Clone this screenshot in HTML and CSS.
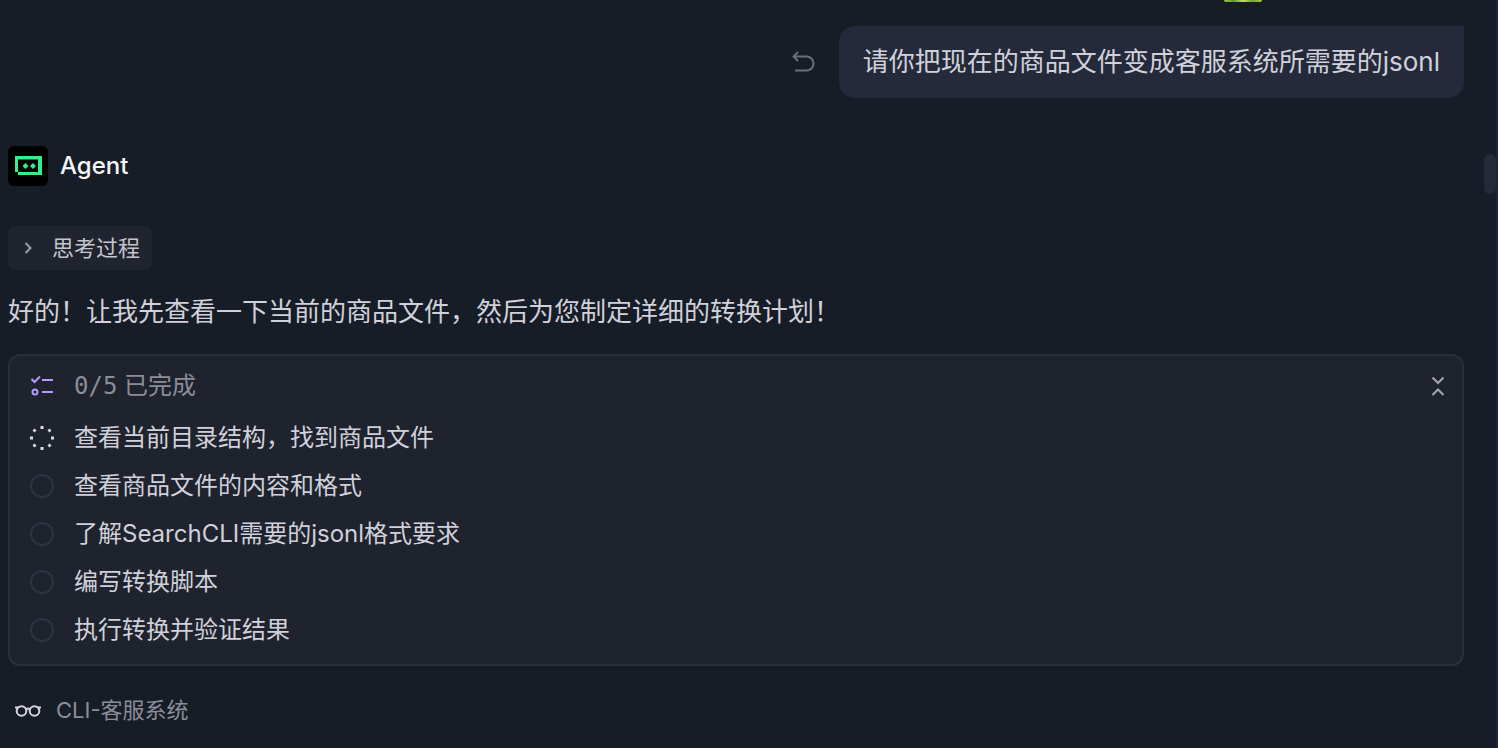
FILE: index.html
```html
<!DOCTYPE html>
<html lang="zh-CN">
<head>
    <meta charset="UTF-8">
    <meta name="viewport" content="width=device-width, initial-scale=1.0">
    <title>Agent</title>
    <link rel="stylesheet" href="styles.css">
</head>
<body>
    <main class="chat">
        <div class="user-avatar"></div>

        <div class="user-row">
            <button type="button" class="icon-btn" aria-label="撤回">
                <svg width="24" height="24" viewBox="0 0 24 24" fill="none" stroke="#6a6e79" stroke-width="2">
                    <path d="M7 2L2.500 6.500L7 11M3 6.500H15.500A7 7 0 0 1 15.500 20.500H4"/>
                </svg>
            </button>
            <p class="bubble">请你把现在的商品文件变成客服系统所需要的jsonl</p>
        </div>

        <div class="agent">
            <svg class="agent-logo" width="40" height="40" viewBox="0 0 40 40">
                <path fill="#32f08c" fill-rule="evenodd" d="M7 10H34V29H10V26H7ZM10 13.500V26H30V13.500Z"/>
                <path fill="#32f08c" d="M17.500 17L20.500 20L17.500 23L14.500 20ZM25 17L28 20L25 23L22 20Z"/>
            </svg>
            <span class="agent-name">Agent</span>
        </div>

        <button type="button" class="thinking">
            <svg width="16" height="16" viewBox="0 0 16 16" fill="none" stroke="#9a9da8" stroke-width="2">
                <path d="M5.500 3L10.500 8L5.500 13"/>
            </svg>
            思考过程
        </button>

        <p class="reply">好的！让我先查看一下当前的商品文件，然后为您制定详细的转换计划！</p>

        <section class="todo">
            <header class="todo-head">
                <svg width="24" height="24" viewBox="0 0 24 24" fill="none" stroke="#b799ff" stroke-width="2">
                    <path d="M1.500 5L4.500 8L10 2.500M12 6H23M12 18H23"/>
                    <circle cx="5" cy="18" r="2.500"/>
                </svg>
                <span class="todo-status"><span class="count">0/5</span> 已完成</span>
                <button type="button" class="icon-btn" aria-label="收起">
                    <svg width="24" height="24" viewBox="0 0 24 24" fill="none" stroke="#a5a7b1" stroke-width="2">
                        <path d="M6.500 3.500L12 9L17.500 3.500M6.500 21L12 15.500L17.500 21"/>
                    </svg>
                </button>
            </header>
            <ul class="todo-list">
                <li>
                    <svg width="24" height="24" viewBox="0 0 24 24" fill="#dcdde3">
                        <path d="M10.500 0h3v3h-3zM10.500 21h3v3h-3zM0 10.500h3v3h-3zM21 10.500h3v3h-3z"/>
                        <path d="M4.500 2.500l2 2l-2 2l-2-2zM19.500 2.500l2 2l-2 2l-2-2zM4.500 17.500l2 2l-2 2l-2-2zM19.500 17.500l2 2l-2 2l-2-2z"/>
                    </svg>
                    查看当前目录结构，找到商品文件
                </li>
                <li><span class="circle"></span>查看商品文件的内容和格式</li>
                <li><span class="circle"></span>了解SearchCLI需要的jsonl格式要求</li>
                <li><span class="circle"></span>编写转换脚本</li>
                <li><span class="circle"></span>执行转换并验证结果</li>
            </ul>
        </section>

        <div class="source">
            <svg width="28" height="20" viewBox="0 0 28 20" fill="none" stroke="#d5d6df" stroke-width="2">
                <circle cx="7.500" cy="11" r="4.800"/>
                <circle cx="20.500" cy="11" r="4.800"/>
                <path d="M1 7.500H5M23 7.500H27M12 9.500Q14 7.500 16 9.500"/>
            </svg>
            CLI-客服系统
        </div>
    </main>
    <aside class="rail">
        <div class="thumb"></div>
    </aside>
</body>
</html>
```

FILE: styles.css
```css
* {
    box-sizing: border-box;
}

body {
    margin: 0;
    min-height: 100vh;
    display: flex;
    background-color: #171d26;
    color: #d0d1da;
    font-family: Inter, "Noto Sans CJK SC", sans-serif;
    font-size: 24px;
    line-height: 32px;
}

p, ul {
    margin: 0;
    padding: 0;
}

button {
    border: none;
    font-family: inherit;
    line-height: inherit;
    cursor: pointer;
}

svg {
    display: block;
    flex: none;
}

.chat {
    flex: 1;
    display: flex;
    flex-direction: column;
    padding: 0 20px 0 8px;
}

.user-avatar {
    align-self: flex-end;
    width: 38px;
    height: 2px;
    margin-right: 202px;
    border-radius: 0 0 4px 4px;
    background: linear-gradient(90deg, #9bc83c, #5f9a2c, #c5e25a, #6ba52f, #a8d040);
}

.user-row {
    display: flex;
    justify-content: flex-end;
    align-items: center;
    gap: 24px;
    margin-top: 24px;
}

.icon-btn {
    padding: 0;
    background: none;
}

.bubble {
    padding: 18px 24px;
    border-radius: 16px 0 16px 16px;
    background-color: #252a3a;
    font-size: 26px;
    line-height: 36px;
}

.agent {
    display: flex;
    align-items: center;
    gap: 12px;
    margin-top: 48px;
}

.agent-logo {
    border-radius: 6px;
    background-color: #000;
}

.agent-name {
    color: #f5f6fa;
    font-weight: 500;
}

.thinking {
    align-self: flex-start;
    display: flex;
    align-items: center;
    gap: 16px;
    height: 44px;
    margin-top: 40px;
    padding: 0 12px;
    border-radius: 8px;
    background-color: #1f242f;
    color: #c3c4ce;
    font-size: 22px;
}

.reply {
    margin-top: 20px;
    font-size: 26px;
    line-height: 44px;
}

.todo {
    margin-top: 20px;
    padding: 6px 12px 10px 20px;
    border: 2px solid #29303b;
    border-radius: 12px;
    background-color: #1e232e;
}

.todo-head {
    display: flex;
    align-items: center;
    gap: 20px;
    height: 48px;
    margin-bottom: 4px;
    color: #8b8d98;
}

.todo-status {
    flex: 1;
}

.count {
    font-family: "DejaVu Sans Mono", monospace;
}

.todo-list {
    list-style: none;
}

.todo-list li {
    display: flex;
    align-items: center;
    gap: 20px;
    min-height: 48px;
}

.circle {
    width: 24px;
    height: 24px;
    flex: none;
    border: 2px solid #2e3342;
    border-radius: 50%;
}

.source {
    display: flex;
    align-items: center;
    gap: 14px;
    margin-top: 28px;
    padding-left: 6px;
    color: #8b8d98;
    font-size: 22px;
}

/* right edge with the scroll thumb */
.rail {
    width: 14px;
    flex: none;
    padding-top: 154px;
    border-right: 2px solid #212634;
}

.thumb {
    height: 40px;
    border-radius: 6px;
    background-color: #252a3a;
}
```
